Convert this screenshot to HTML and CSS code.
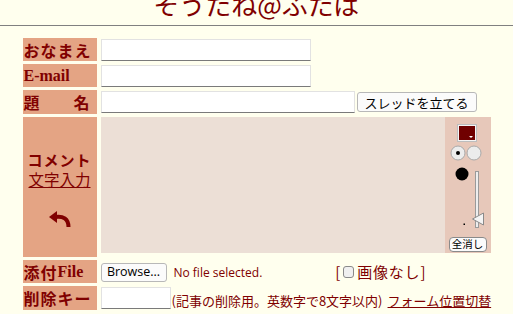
FILE: index.html
```html
<!DOCTYPE html>
<html lang="ja">
<head>
<meta charset="utf-8">
<link rel="stylesheet" href="styles.css">
</head>
<body>
<div class="head"><span class="tit">そうたね@ふたば</span></div>
<hr class="rule">
<form class="post">
  <div class="lbl">おなまえ</div>
  <div class="fld"><input class="txt w-name" type="text"></div>

  <div class="lbl serif">E-mail</div>
  <div class="fld"><input class="txt w-name" type="text"></div>

  <div class="lbl spread"><span>題</span><span>名</span></div>
  <div class="fld"><input class="txt w-sub" type="text"><button class="btn submit" type="button">スレッドを立てる</button></div>

  <div class="lbl com">
    <span class="com-t">コメント</span>
    <span class="com-l">文字入力</span>
    <svg class="undo" width="22" height="18" viewBox="0 0 22 18">
      <polygon points="0,7 8,1 8,13" fill="#800000"/>
      <path d="M6,7 C14,5.5 19.5,9 19.5,17" fill="none" stroke="#800000" stroke-width="4"/>
    </svg>
  </div>
  <div class="fld top">
    <div class="canvas"></div>
    <div class="tools">
      <svg width="46" height="118" viewBox="0 0 46 118">
        <rect x="12.5" y="7.5" width="19" height="17" fill="#f4f4f4" stroke="#bdbdbd"/>
        <rect x="14" y="9" width="16" height="14" fill="#700000"/>
        <polygon points="24,19 28,19 26,21" fill="#ffffff"/>
        <circle cx="13" cy="36" r="7" fill="#ececec" stroke="#a9a9a9"/>
        <circle cx="13" cy="36" r="2" fill="#000"/>
        <circle cx="29" cy="36" r="7" fill="#ececec" stroke="#a9a9a9"/>
        <circle cx="17" cy="57" r="6.5" fill="#000"/>
        <rect x="30.5" y="54.5" width="3" height="56" fill="#eeeeee" stroke="#9a9a9a"/>
        <polygon points="27.5,102 38.5,96 38.5,108" fill="#f4f4f4" stroke="#8a8a8a"/>
        <rect x="18.5" y="106.5" width="1.5" height="1.5" fill="#000"/>
      </svg>
      <button class="btn clear" type="button">全消し</button>
    </div>
  </div>

  <div class="lbl">添付<span class="serif">File</span></div>
  <div class="fld">
    <button class="btn browse" type="button">Browse...</button>
    <span class="nofile">No file selected.</span>
    <span class="noimg">[<span class="chk"></span>画像なし]</span>
  </div>

  <div class="lbl">削除キー</div>
  <div class="fld">
    <input class="txt w-key" type="password">
    <span class="note">(記事の削除用。英数字で8文字以内)</span>
    <span class="swap">フォーム位置切替</span>
  </div>
</form>
</body>
</html>
```

FILE: styles.css
```css
* { box-sizing: border-box; }
html, body { margin: 0; padding: 0; background: #ffffee; overflow: hidden; }
body { font-family: "Noto Sans CJK JP", sans-serif; color: #800000; }

.head { text-align: center; height: 28px; line-height: 28px; margin-top: -10px; }
.tit { font-size: 26px; color: #800000; font-family: "Noto Sans CJK JP", sans-serif; }

.rule { border: 0; border-top: 1px solid #808080; height: 0; margin: 7px 0 12px; }

.post {
  display: grid;
  grid-template-columns: 74px 390px;
  grid-template-rows: 23px 23px 24px 140px 23px 24px;
  column-gap: 4px;
  row-gap: 3px;
  width: 468px;
  margin: 0 auto;
}

.lbl {
  background: #e4a484;
  font-weight: bold;
  font-size: 16px;
  letter-spacing: 1px;
  display: flex;
  align-items: center;
  padding-left: 1px;
  line-height: 1;
  white-space: nowrap;
}
.serif { font-family: "Liberation Serif", serif; letter-spacing: 0; }
.lbl.spread { justify-content: space-between; padding-right: 6px; }

.fld { display: flex; align-items: center; white-space: nowrap; }
.fld.top { align-items: flex-start; }

.txt {
  height: 22px;
  background: #fff;
  border: 1px solid #e2e2e2;
  border-bottom-color: #7a7a7a;
  padding: 0;
  margin: 0;
}
.w-name { width: 210px; }
.w-sub { width: 254px; }
.w-key { width: 70px; }

.btn {
  font-family: "Noto Sans CJK JP", sans-serif;
  color: #000;
  background: #fbfbfb;
  border: 1px solid #b8b8b8;
  border-radius: 3px;
  padding: 0;
  margin: 0;
  line-height: 1;
}
.submit { width: 120px; height: 20px; font-size: 13px; margin-left: 2px; }

.com { flex-direction: column; justify-content: center; align-items: center; padding: 6px 0 0; letter-spacing: 0; }
.com-t { font-size: 15px; letter-spacing: 1px; }
.com-l { font-size: 15.5px; font-weight: normal; text-decoration: underline; margin-top: 5px; }
.undo { margin-top: 22px; }

.canvas { width: 344px; height: 136px; background: #ecdfd6; }
.tools { width: 46px; height: 136px; background: #e7c8ba; display: flex; flex-direction: column; }
.clear { width: 38px; height: 15px; font-size: 10.5px; margin: 2px 0 0 4px; border-color: #8a8a8a; border-radius: 4px; overflow: hidden; white-space: nowrap; }

.browse { width: 66px; height: 19px; font-size: 12.5px; font-family: "Open Sans", sans-serif; margin-top: 2px; }
.nofile { font-family: "Open Sans", sans-serif; font-size: 12px; margin-left: 7px; margin-top: 2px; }
.noimg { font-size: 15px; margin-left: 73px; display: flex; align-items: center; letter-spacing: 0.8px; }
.chk { width: 11px; height: 12px; border: 1px solid #8a8a8a; border-radius: 3px; background: #f0f0f0; margin: 0 3px 0 2px; }

.note { font-size: 13px; margin-left: 1px; margin-top: 4px; }
.swap { font-size: 13px; margin-left: 5px; text-decoration: underline; margin-top: 4px; }
```
